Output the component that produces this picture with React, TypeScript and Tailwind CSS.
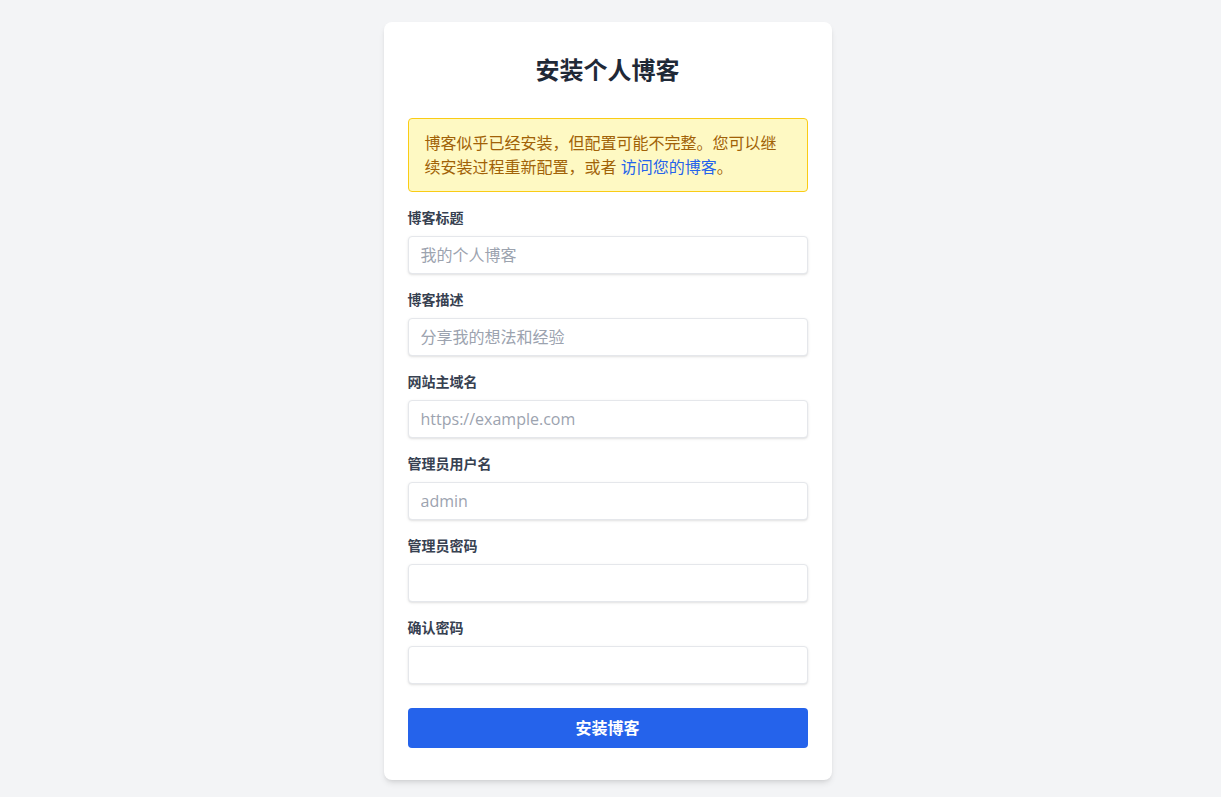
import React from "react";

const fields = [
  { label: "博客标题", placeholder: "我的个人博客", type: "text" },
  { label: "博客描述", placeholder: "分享我的想法和经验", type: "text" },
  { label: "网站主域名", placeholder: "https://example.com", type: "text" },
  { label: "管理员用户名", placeholder: "admin", type: "text" },
  { label: "管理员密码", placeholder: "", type: "password" },
  { label: "确认密码", placeholder: "", type: "password" },
];

export default function App() {
  return (
    <div
      className="min-h-screen bg-[#f3f4f6] pt-[22px] pb-[17px] pr-[6px]"
      style={{ fontFamily: '"Open Sans", "Noto Sans CJK SC", sans-serif' }}
    >
      <div className="mx-auto w-[448px] rounded-lg bg-white px-6 py-8 shadow-[0_4px_6px_-1px_rgba(0,0,0,0.1),0_2px_4px_-2px_rgba(0,0,0,0.1)]">
        <h1 className="mb-8 text-center text-2xl font-bold leading-8 text-[#1f2937]">安装个人博客</h1>
        <div className="mb-4 rounded border border-[#facc15] bg-[#fef9c3] px-4 py-3 text-base leading-6 text-[#a16207]">
          <span>博客似乎已经安装，但配置可能不完整。您可以继续安装过程重新配置，或者 </span>
          <a href="#" className="text-[#2563eb]">访问您的博客</a>
          <span>。</span>
        </div>
        <form onSubmit={(e) => e.preventDefault()}>
          {fields.map((f) => (
            <div key={f.label} className="mb-4">
              <label className="mb-2 block text-sm font-bold leading-5 text-[#374151]">{f.label}</label>
              <input
                type={f.type}
                placeholder={f.placeholder}
                className="block h-[38px] w-full rounded border border-[#e5e7eb] bg-white px-3 text-base text-[#374151] shadow-[0_1px_3px_0_rgba(0,0,0,0.1),0_1px_2px_-1px_rgba(0,0,0,0.1)] outline-none placeholder:text-[#9ca3af]"
              />
            </div>
          ))}
          <button
            type="submit"
            className="mt-6 block h-10 w-full rounded bg-[#2563eb] text-base font-bold text-white"
          >
            安装博客
          </button>
        </form>
      </div>
    </div>
  );
}
